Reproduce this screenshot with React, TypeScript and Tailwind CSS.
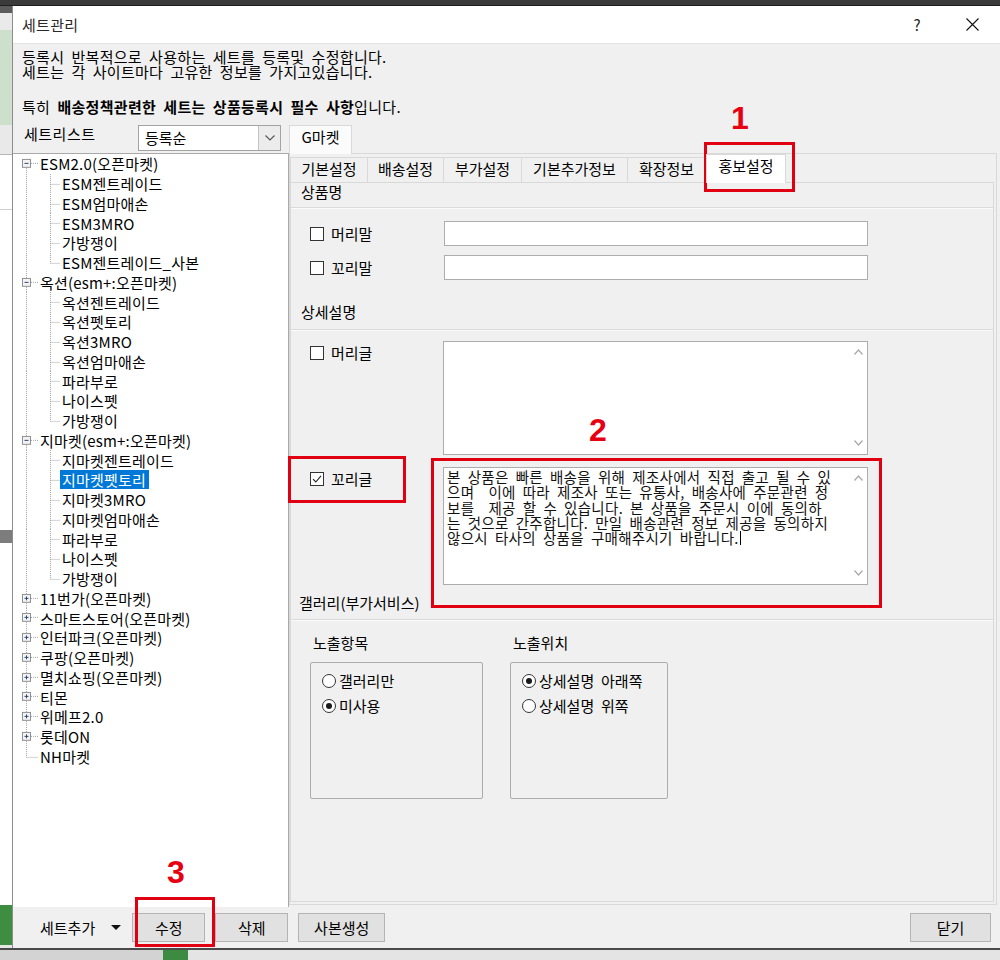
import React from "react";

type Root = { label: string; state: "open" | "closed" | "leaf"; children?: string[] };

const TREE: Root[] = [
  { label: "ESM2.0(오픈마켓)", state: "open", children: ["ESM젠트레이드", "ESM엄마애손", "ESM3MRO", "가방쟁이", "ESM젠트레이드_사본"] },
  { label: "옥션(esm+:오픈마켓)", state: "open", children: ["옥션젠트레이드", "옥션펫토리", "옥션3MRO", "옥션엄마애손", "파라부로", "나이스펫", "가방쟁이"] },
  { label: "지마켓(esm+:오픈마켓)", state: "open", children: ["지마켓젠트레이드", "지마켓펫토리", "지마켓3MRO", "지마켓엄마애손", "파라부로", "나이스펫", "가방쟁이"] },
  { label: "11번가(오픈마켓)", state: "closed" },
  { label: "스마트스토어(오픈마켓)", state: "closed" },
  { label: "인터파크(오픈마켓)", state: "closed" },
  { label: "쿠팡(오픈마켓)", state: "closed" },
  { label: "멸치쇼핑(오픈마켓)", state: "closed" },
  { label: "티몬", state: "closed" },
  { label: "위메프2.0", state: "closed" },
  { label: "롯데ON", state: "closed" },
  { label: "NH마켓", state: "leaf" },
];

const DOT = "#a3a3a3";

function Dotted(props: { x1: number; y1: number; x2: number; y2: number }) {
  return <line {...props} stroke={DOT} strokeWidth={1} strokeDasharray="1 1" shapeRendering="crispEdges" />;
}

function RootRow({ label, state, first }: { label: string; state: Root["state"]; first: boolean }) {
  return (
    <div className="flex items-center h-[19.75px]">
      <svg width="25" height="20" viewBox="0 0 25 20" preserveAspectRatio="none" className="shrink-0 h-full">
        {state === "leaf" ? (
          <>
            <Dotted x1={13.5} y1={0} x2={13.5} y2={10.5} />
            <Dotted x1={13.5} y1={10.5} x2={25} y2={10.5} />
          </>
        ) : (
          <>
            {!first && <Dotted x1={13.5} y1={0} x2={13.5} y2={5.5} />}
            <Dotted x1={13.5} y1={14} x2={13.5} y2={20} />
            <rect x={9.5} y={5.5} width={8} height={8} fill="#f3f3f3" stroke="#8f9094" shapeRendering="crispEdges" />
            <line x1={11.5} y1={9.5} x2={15.5} y2={9.5} stroke="#2b4a78" shapeRendering="crispEdges" />
            {state === "closed" && <line x1={13.5} y1={7.5} x2={13.5} y2={11.5} stroke="#2b4a78" shapeRendering="crispEdges" />}
            <Dotted x1={18} y1={9.5} x2={25} y2={9.5} />
          </>
        )}
      </svg>
      <span className="pl-[2px] pr-[3px] leading-[19px] tracking-[0.2px]">{label}</span>
    </div>
  );
}

function ChildRow({ label, last, selected }: { label: string; last: boolean; selected: boolean }) {
  return (
    <div className="flex items-center h-[19.75px]">
      <svg width="47" height="20" viewBox="0 0 47 20" preserveAspectRatio="none" className="shrink-0 h-full">
        <Dotted x1={13.5} y1={0} x2={13.5} y2={20} />
        <Dotted x1={37.5} y1={0} x2={37.5} y2={last ? 10.5 : 20} />
        <Dotted x1={37.5} y1={10.5} x2={47} y2={10.5} />
      </svg>
      <span
        className={
          selected
            ? "pl-[2px] pr-[3px] leading-[19px] tracking-[0.2px] bg-[#0078d7] text-white"
            : "pl-[2px] pr-[3px] leading-[19px] tracking-[0.2px]"
        }
      >
        {label}
      </span>
    </div>
  );
}

function Tree() {
  return (
    <div className="w-[276px] shrink-0 bg-white border-t border-r border-[#a9a9a9] overflow-hidden">
      {TREE.map((r, i) => (
        <React.Fragment key={i}>
          <RootRow label={r.label} state={r.state} first={i === 0} />
          {r.state === "open" &&
            r.children!.map((c, j) => (
              <ChildRow key={j} label={c} last={j === r.children!.length - 1} selected={i === 2 && j === 1} />
            ))}
        </React.Fragment>
      ))}
    </div>
  );
}

function Checkbox({ checked }: { checked?: boolean }) {
  return (
    <span className="w-[14px] h-[14px] border border-[#333] bg-white flex items-center justify-center shrink-0">
      {checked && (
        <svg width="10" height="10" viewBox="0 0 10 10">
          <path d="M1 5.2 L3.8 8 L9 1.8" fill="none" stroke="#222" strokeWidth="1.1" />
        </svg>
      )}
    </span>
  );
}

function Radio({ checked, label }: { checked?: boolean; label: string }) {
  return (
    <div className="flex items-center h-[25px]">
      <span className="w-[14px] h-[14px] rounded-full border border-[#333] bg-white flex items-center justify-center shrink-0">
        {checked && <span className="w-[6px] h-[6px] rounded-full bg-[#1a1a1a]" />}
      </span>
      <span className="pl-[3px] leading-[18px]">{label}</span>
    </div>
  );
}

function Chevron({ up }: { up?: boolean }) {
  return (
    <svg width="9" height="6" viewBox="0 0 9 6">
      <path d={up ? "M0.5 5.5 L4.5 1 L8.5 5.5" : "M0.5 0.5 L4.5 5 L8.5 0.5"} fill="none" stroke="#a8a8a8" strokeWidth="1.2" />
    </svg>
  );
}

function TextArea({ h, children }: { h: string; children?: React.ReactNode }) {
  return (
    <div className={`flex w-[425px] ${h} border border-[#acacac] bg-white`}>
      <div className="flex-1 pl-[3px] pt-[1px]">{children}</div>
      <div className="w-[18px] flex flex-col items-center justify-between pt-[7px] pb-[8px]">
        <Chevron up />
        <Chevron />
      </div>
    </div>
  );
}

function Separator() {
  return (
    <div>
      <div className="h-[1px] bg-[#dadada]" />
      <div className="h-[1px] bg-[#fbfbfb]" />
    </div>
  );
}

const TABS: [string, string][] = [
  ["기본설정", "w-[78px]"],
  ["배송설정", "w-[76px]"],
  ["부가설정", "w-[78px]"],
  ["기본추가정보", "w-[106px]"],
  ["확장정보", "w-[78px]"],
];

const TAIL_LINES = [
  "본 상품은 빠른 배송을 위해 제조사에서 직접 출고 될 수 있",
  "으며  이에 따라 제조사 또는 유통사, 배송사에 주문관련 정",
  "보를  제공 할 수 있습니다. 본 상품을 주문시 이에 동의하",
  "는 것으로 간주합니다. 만일 배송관련 정보 제공을 동의하지",
];

function RightPanel() {
  return (
    <div className="flex-1 mr-[3px] mb-[2px] border border-[#d9d9d9] flex flex-col">
      {/* tab strip */}
      <div className="h-[28px] flex items-end">
        {TABS.map(([t, w], i) => (
          <div
            key={t}
            className={`${w} h-[25px] border-t border-r border-[#d9d9d9] ${i === 0 ? "border-l" : ""} flex items-center justify-center pb-[3px] leading-[18px]`}
          >
            {t}
          </div>
        ))}
        <div className="w-[80px] h-[29px] -mb-[1px] relative z-10 bg-white border-t border-r border-l border-[#d9d9d9] flex items-start justify-center pt-[2px] leading-[18px]">
          홍보설정
        </div>
      </div>
      {/* page */}
      <div className="flex-1 mr-[2px] mb-[2px] border border-[#d9d9d9] flex flex-col">
        <div className="h-[24px] pl-[10px] leading-[18px]">상품명</div>
        <Separator />
        <div className="pt-[12px]">
          <div className="flex items-center h-[25px]">
            <div className="w-[153px] pl-[19px] flex items-center gap-[7px]">
              <Checkbox />
              <span className="leading-[18px]">머리말</span>
            </div>
            <div className="w-[424px] h-[25px] border border-[#adadad] bg-white" />
          </div>
          <div className="flex items-center h-[25px] mt-[9px]">
            <div className="w-[153px] pl-[19px] flex items-center gap-[7px]">
              <Checkbox />
              <span className="leading-[18px]">꼬리말</span>
            </div>
            <div className="w-[424px] h-[25px] border border-[#adadad] bg-white" />
          </div>
        </div>
        <div className="mt-[23px] pl-[10px] leading-[18px] h-[18px]">상세설명</div>
        <div className="mt-[8px]">
          <Separator />
        </div>
        <div className="pt-[10px]">
          <div className="flex items-start">
            <div className="w-[152px] pl-[19px] pt-[3px] flex items-center gap-[7px]">
              <Checkbox />
              <span className="leading-[18px]">머리글</span>
            </div>
            <TextArea h="h-[114px]" />
          </div>
          <div className="flex items-start mt-[12px]">
            <div className="w-[152px] pl-[19px] pt-[3px] flex items-center gap-[7px]">
              <Checkbox checked />
              <span className="leading-[18px]">꼬리글</span>
            </div>
            <TextArea h="h-[118px]">
              <div className="text-[14.5px] leading-[15.3px] tracking-[0.3px] [word-spacing:3.5px] whitespace-pre text-[#111]">
                {TAIL_LINES.map((l) => (
                  <div key={l}>{l}</div>
                ))}
                <div className="flex items-center">
                  <span>않으시 타사의 상품을 구매해주시기 바랍니다.</span>
                  <span className="inline-block w-[1px] h-[14px] bg-black ml-[1px]" />
                </div>
              </div>
            </TextArea>
          </div>
        </div>
        <div className="mt-[9px] pl-[8px] leading-[18px] h-[18px]">갤러리(부가서비스)</div>
        <div className="mt-[7px]">
          <Separator />
        </div>
        <div className="flex pl-[19px] pt-[13px] gap-[27px]">
          <div className="w-[173px]">
            <div className="pl-[3px] leading-[18px]">노출항목</div>
            <div className="mt-[10px] h-[137px] border border-[#acacac] rounded-[2px] pl-[11px] pt-[5px]">
              <Radio label="갤러리만" />
              <Radio label="미사용" checked />
            </div>
          </div>
          <div className="w-[158px]">
            <div className="pl-[3px] leading-[18px]">노출위치</div>
            <div className="mt-[10px] h-[137px] border border-[#acacac] rounded-[2px] pl-[11px] pt-[5px]">
              <Radio label="상세설명 아래쪽" checked />
              <Radio label="상세설명 위쪽" />
            </div>
          </div>
        </div>
      </div>
    </div>
  );
}

function Button({ w, label }: { w: string; label: string }) {
  return (
    <div className={`${w} h-[29px] bg-[#e1e1e1] border border-[#b4b4b4] flex items-center justify-center leading-[18px]`}>
      {label}
    </div>
  );
}

function Dialog() {
  return (
    <div className="flex-1 flex flex-col border-l border-[#8d8d8d] bg-[#f0f0f0]">
      {/* title */}
      <div className="h-[38px] bg-white flex items-center pl-[9px] pr-[21px] border-b border-[#e4e4e4]">
        <span className="text-[#2a2a2a] leading-[18px] tracking-[0.3px]">세트관리</span>
        <div className="ml-auto flex items-center">
          <span className="w-[12px] text-center text-[15px] text-[#222] leading-[18px]">?</span>
          <span className="w-[43px]" />
          <svg width="13" height="13" viewBox="0 0 13 13">
            <path d="M0.5 0.5 L12.5 12.5 M12.5 0.5 L0.5 12.5" stroke="#111" strokeWidth="1.1" />
          </svg>
        </div>
      </div>
      {/* body */}
      <div className="flex-1 flex flex-col">
        <div className="h-[81px] pl-[9px] pt-[5px] leading-[15px] tracking-[0.3px]">
          <div>등록시 반복적으로 사용하는 세트를 등록및 수정합니다.</div>
          <div>세트는 각 사이트마다 고유한 정보를 가지고있습니다.</div>
          <div className="mt-[20px]">
            특히 <b className="font-bold">배송정책관련한 세트는 상품등록시 필수 사항</b>입니다.
          </div>
        </div>
        <div className="h-[28px] flex items-start">
          <div className="w-[125px] pl-[11px] leading-[18px] tracking-[0.5px]">세트리스트</div>
          <div className="w-[143px] h-[26px] border border-[#a3a3a3] bg-white flex">
            <div className="flex-1 pl-[6px] leading-[24px]">등록순</div>
            <div className="w-[22px] h-full bg-[#ececec] border-l border-[#c3c3c3] flex items-center justify-center">
              <svg width="10" height="6" viewBox="0 0 10 6">
                <path d="M0.5 0.5 L5 5 L9.5 0.5" fill="none" stroke="#555" strokeWidth="1.1" />
              </svg>
            </div>
          </div>
          <div className="ml-[8px] w-[63px] h-[29px] -mb-[1px] relative z-10 bg-[#fbfbfb] border-t border-l border-r border-[#d9d9d9] text-center pt-[2px] leading-[18px]">
            G마켓
          </div>
        </div>
        <div className="h-[754px] flex">
          <Tree />
          <RightPanel />
        </div>
        <div className="h-[40px] flex items-start pt-[6px]">
          <div className="h-[29px] flex items-center pl-[27px]">
            <span className="leading-[18px]">세트추가</span>
            <svg width="10" height="5" viewBox="0 0 10 5" className="ml-[16px]">
              <path d="M0 0 L10 0 L5 5 Z" fill="#111" />
            </svg>
          </div>
          <div className="ml-[11px]">
            <Button w="w-[73px]" label="수정" />
          </div>
          <div className="ml-[10px]">
            <Button w="w-[73px]" label="삭제" />
          </div>
          <div className="ml-[10px]">
            <Button w="w-[87px]" label="사본생성" />
          </div>
          <div className="ml-auto mr-[9px]">
            <Button w="w-[81px]" label="닫기" />
          </div>
        </div>
      </div>
    </div>
  );
}

function LeftBackground() {
  return (
    <div className="w-[12px] shrink-0 flex flex-col">
      <div className="h-[7px] bg-[#5c5c5c]" />
      <div className="h-[17px] bg-[#eaeaea]" />
      <div className="h-[95px] bg-[#cde0cc]" />
      <div className="h-[30px] bg-[#e9e9e9] border-b border-[#b5b5b5]" />
      <div className="h-[55px] bg-white border-b border-[#cfcfcf]" />
      <div className="h-[320px] bg-white" />
      <div className="h-[13px] bg-[#7d7d7d]" />
      <div className="h-[362px] bg-white" />
      <div className="h-[40px] bg-[#3e8e41]" />
      <div className="flex-1 bg-[#e6e6e6]" />
    </div>
  );
}

function Annotations() {
  const num = "absolute w-[30px] text-center text-[32px] leading-[36px] font-bold text-[#e60012] font-['Liberation_Sans',Arial,sans-serif]";
  const box = "absolute border-[3px] border-[#e00012]";
  return (
    <>
      <div className={`${num} left-[725px] top-[100px]`}>1</div>
      <div className={`${box} left-[704px] top-[142px] w-[91px] h-[50px]`} />
      <div className={`${num} left-[583px] top-[412px]`}>2</div>
      <div className={`${box} left-[431px] top-[458px] w-[451px] h-[150px]`} />
      <div className={`${box} left-[288px] top-[456px] w-[118px] h-[47px]`} />
      <div className={`${num} left-[161px] top-[854px]`}>3</div>
      <div className={`${box} left-[135px] top-[897px] w-[80px] h-[50px]`} />
    </>
  );
}

export default function App() {
  return (
    <div className="relative w-[1000px] h-[960px] overflow-hidden bg-[#e6e6e6] font-['Noto_Sans_CJK_KR','Noto_Sans',sans-serif] text-[15px] text-black [word-spacing:3.5px]">
      <div className="h-[6px] bg-[#3b3b3b] border-b border-[#1f1f1f]" />
      <div className="flex h-[942px]">
        <LeftBackground />
        <Dialog />
      </div>
      <div className="h-[12px] flex border-t-2 border-[#4a4a4a]">
        <div className="w-[163px] bg-[#d3d3d3]" />
        <div className="w-[25px] bg-[#3d8b40]" />
        <div className="flex-1 bg-[#e4e4e4]" />
      </div>
      <Annotations />
    </div>
  );
}
